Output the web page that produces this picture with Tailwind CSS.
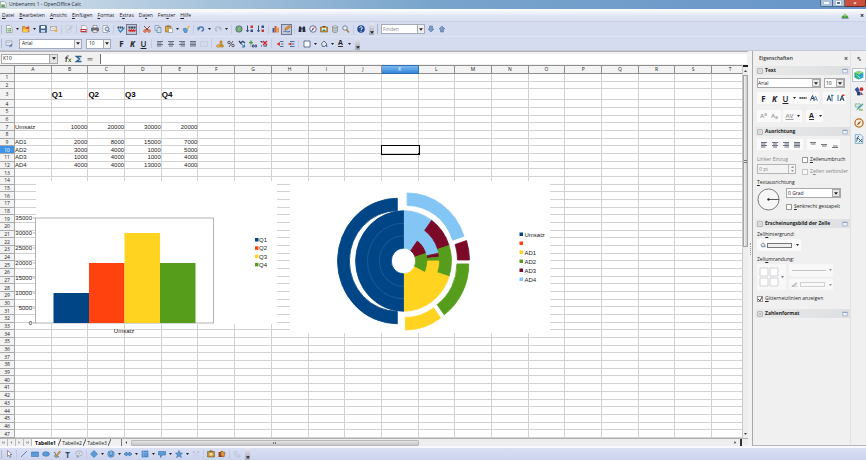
<!DOCTYPE html>
<html lang="de">
<head>
  <meta charset="UTF-8" />
  <meta name="viewport" content="width=device-width, initial-scale=1.0" />
  <title>Unbenannt 1 - OpenOffice Calc</title>
  <script src="https://cdn.jsdelivr.net/npm/@tailwindcss/browser@4"></script>
</head>
<body class="h-screen flex flex-col overflow-hidden bg-[#f0f0f0] text-[#222] text-[5px] leading-[7px] font-['Open_Sans',sans-serif]">

  <!-- Title bar -->
  <header class="flex h-[9px] shrink-0 items-center bg-linear-to-r from-[#d3e0ea] via-[#78a4cc] to-[#6795c8]">
    <svg viewBox="0 0 16 16" class="w-[7px] h-[7px]"><path d="M1 1h9l4 4v10H1z" fill="#f4f8f4" stroke="#4b6b58"/><path d="M3 8h8v6H3z" fill="#5f9d62"/></svg>
    <h1 class="ml-[2px] text-[#1c2530]">Unbenannt 1 - OpenOffice Calc</h1>
    <div class="ml-auto flex self-start h-[7px]">
      <button aria-label="Minimieren" class="w-[13px] flex items-center justify-center rounded-bl-[2px] border border-t-0 border-[#4d6c8c] bg-[#a9c1da]"><span class="w-[5px] h-[2px] bg-white"></span></button>
      <button aria-label="Maximieren" class="w-[12px] flex items-center justify-center border border-t-0 border-l-0 border-[#4d6c8c] bg-[#a9c1da]"><span class="w-[5px] h-[4px] border border-white bg-[#55708c]"></span></button>
      <button aria-label="Schließen" class="w-[21px] flex items-center justify-center rounded-br-[2px] border border-t-0 border-l-0 border-[#6b2a20] bg-[#c9513c] text-white font-bold text-[6px]">×</button>
    </div>
  </header>

  <!-- Menu bar -->
  <nav class="flex h-[12px] shrink-0 items-center gap-[5px] border-t border-white bg-linear-to-b from-[#fbfcff] via-[#e2e7f6] to-[#d9dff2] pl-[2px] pr-[2px]">
    <a href="#"><u>D</u>atei</a>
    <a href="#"><u>B</u>earbeiten</a>
    <a href="#"><u>A</u>nsicht</a>
    <a href="#"><u>E</u>infügen</a>
    <a href="#"><u>F</u>ormat</a>
    <a href="#">E<u>x</u>tras</a>
    <a href="#">Da<u>t</u>en</a>
    <a href="#">Fen<u>s</u>ter</a>
    <a href="#"><u>H</u>ilfe</a>
    <svg viewBox="0 0 16 12" class="ml-auto w-[8px] h-[6px]"><path d="M1 10c0-8 14-8 14 0z" fill="#4c9b3d"/><circle cx="8" cy="4" r="3" fill="#9bd06c"/><path d="M1 11h14" stroke="#35549a"/></svg>
    <button aria-label="Dokument schließen" class="ml-[6px] text-[7px] font-bold">×</button>
  </nav>

  <!-- Standard toolbar -->
  <div class="flex h-[15px] shrink-0 items-center bg-[#d5dcf0] border-t border-[#cbd2e8]">
    <div id="bar-standard" class="flex items-center"></div>
    <span class="ml-[3px] mr-[3px] w-[1px] h-[10px] bg-[#a6aecb]"></span>
    <div class="flex h-[10px] w-[44px] border border-[#a5abbb] bg-white">
      <input aria-label="Finden" placeholder="Finden" class="min-w-0 flex-1 pl-[1px] outline-none placeholder:text-[#8a8a8a]" />
      <button aria-label="Suchliste" class="w-[7px] flex items-center justify-center border-l border-[#a5abbb] bg-[#eee]"><svg viewBox="0 0 6 4" class="w-[4px] h-[3px]"><path d="M0 0h6L3 4z" fill="#222"/></svg></button>
    </div>
    <div id="bar-find" class="flex items-center"></div>
  </div>

  <!-- Formatting toolbar -->
  <div class="flex h-[14px] shrink-0 items-center bg-[#d5dcf0] border-t border-[#dfe4f4]">
    <div id="bar-style" class="flex items-center"></div>
    <div class="ml-[5px] flex h-[10px] w-[63px] border border-[#a5abbb] bg-white">
      <select aria-label="Schriftart" class="min-w-0 flex-1 appearance-none pl-[2px]"><option>Arial</option></select>
      <span class="w-[7px] flex items-center justify-center border-l border-[#a5abbb] bg-[#eee]"><svg viewBox="0 0 6 4" class="w-[4px] h-[3px]"><path d="M0 0h6L3 4z" fill="#222"/></svg></span>
    </div>
    <div class="ml-[4px] mr-[5px] flex h-[10px] w-[25px] border border-[#a5abbb] bg-white">
      <select aria-label="Schriftgröße" class="min-w-0 flex-1 appearance-none pl-[2px]"><option>10</option></select>
      <span class="w-[7px] flex items-center justify-center border-l border-[#a5abbb] bg-[#eee]"><svg viewBox="0 0 6 4" class="w-[4px] h-[3px]"><path d="M0 0h6L3 4z" fill="#222"/></svg></span>
    </div>
    <div id="bar-format" class="flex items-center"></div>
  </div>

  <div class="flex min-h-0 flex-1 border-t border-[#c3c8d8]">
    <main class="flex min-w-0 flex-1 flex-col">

      <!-- Formula bar -->
      <div class="flex h-[14px] shrink-0 items-center border-t border-[#b4b4b4]">
        <div class="ml-[1px] flex h-[10px] w-[57px] border border-[#a9a9a9] bg-white">
          <input aria-label="Namensfeld" value="K10" class="min-w-0 flex-1 pl-[1px] outline-none" />
          <button aria-label="Bereiche" class="w-[8px] flex items-center justify-center border-l border-[#a9a9a9] bg-[#e4e4e4]"><svg viewBox="0 0 6 4" class="w-[4px] h-[3px]"><path d="M0 0h6L3 4z" fill="#222"/></svg></button>
        </div>
        <div id="bar-formula" class="ml-[4px] flex items-center"></div>
        <input aria-label="Eingabezeile" class="ml-[5px] mr-[1px] h-[10px] min-w-0 flex-1 border-l border-[#6c6c6c] bg-white outline-none" />
      </div>

      <div class="flex min-h-0 flex-1">
        <!-- Sheet -->
        <div class="relative min-w-0 flex-1 overflow-hidden bg-white">
          <table class="h-full w-[749px] table-fixed border-separate border-spacing-0 font-['Liberation_Sans',sans-serif] text-[6px] leading-[7px]">
            <thead class="font-['Open_Sans',sans-serif] text-[5px]"><tr id="col-heads"></tr></thead>
            <tbody id="rows"></tbody>
          </table>
          <svg id="bar-chart" role="img" aria-label="Umsatz nach Quartal" viewBox="0 0 262 155" class="absolute left-[15px] top-[116px] w-[262px] h-[155px] font-['Liberation_Sans',sans-serif] text-[6px]"></svg>
          <svg id="ring-chart" role="img" aria-label="Umsatz nach AD" viewBox="0 0 260 152" class="absolute left-[290px] top-[116px] w-[260px] h-[152px] font-['Liberation_Sans',sans-serif] text-[6px]"></svg>
        </div>

        <!-- Vertical scrollbar -->
        <div class="flex w-[6px] shrink-0 flex-col items-center border-l border-[#c8c8c8] bg-[#eeeeee]">
          <span class="h-[2px] w-full bg-[#222]"></span>
          <svg viewBox="0 0 6 4" class="my-[3px] w-[3px] h-[2px]"><path d="M0 4h6L3 0z" fill="#444"/></svg>
          <div class="flex h-[172px] w-full flex-col items-center justify-center gap-[1px] border border-[#a4a4a4] bg-linear-to-r from-[#f4f4f4] to-[#c9c9c9]">
            <span class="w-[3px] h-[1px] bg-[#777]"></span><span class="w-[3px] h-[1px] bg-[#777]"></span>
          </div>
          <svg viewBox="0 0 6 4" class="mt-auto mb-[3px] w-[3px] h-[2px]"><path d="M0 0h6L3 4z" fill="#444"/></svg>
        </div>
      </div>

      <!-- Sheet tabs and horizontal scrollbar -->
      <div class="flex h-[8px] shrink-0 border-t border-[#b0b0b0]">
        <div class="flex w-[32px] text-[#777] [&>button]:flex [&>button]:flex-1 [&>button]:items-center [&>button]:justify-center [&>button]:border-r [&>button]:border-[#bbb]">
          <button aria-label="Erste Tabelle"><svg viewBox="0 0 6 6" class="w-[3px] h-[3px]"><path d="M0 0h1v6H0zM5 0v6L2 3z" fill="#888"/></svg></button>
          <button aria-label="Vorige Tabelle"><svg viewBox="0 0 6 6" class="w-[3px] h-[3px]"><path d="M4 0v6L1 3z" fill="#888"/></svg></button>
          <button aria-label="Nächste Tabelle"><svg viewBox="0 0 6 6" class="w-[3px] h-[3px]"><path d="M1 0v6l3-3z" fill="#888"/></svg></button>
          <button aria-label="Letzte Tabelle"><svg viewBox="0 0 6 6" class="w-[3px] h-[3px]"><path d="M1 0v6l3-3zM5 0h1v6H5z" fill="#888"/></svg></button>
        </div>
        <div class="flex w-[90px] items-center border-r border-[#777]">
          <button class="h-full w-[26px] bg-white pl-[1px] font-bold leading-[6px] text-black">Tabelle1</button>
          <svg viewBox="0 0 3 7" class="w-[3px] h-[7px]"><path d="M0 7L3 0" stroke="#555"/></svg>
          <button class="h-full w-[22px] leading-[6px]">Tabelle2</button>
          <svg viewBox="0 0 3 7" class="w-[3px] h-[7px]"><path d="M0 7L3 0" stroke="#555"/></svg>
          <button class="h-full w-[22px] leading-[6px]">Tabelle3</button>
          <svg viewBox="0 0 3 7" class="w-[3px] h-[7px]"><path d="M0 7L3 0" stroke="#555"/></svg>
        </div>
        <div class="flex min-w-0 flex-1 items-center bg-[#eee]">
          <svg viewBox="0 0 6 6" class="mx-[3px] w-[3px] h-[3px]"><path d="M4 0v6L1 3z" fill="#444"/></svg>
          <div class="flex h-[6px] w-[46%] items-center justify-center gap-[1px] rounded-[1px] border border-[#b8b8b8] bg-linear-to-b from-[#e4e4e4] to-[#c6c6c6]">
            <span class="w-[1px] h-[2px] bg-[#777]"></span><span class="w-[1px] h-[2px] bg-[#777]"></span>
          </div>
          <svg viewBox="0 0 6 6" class="ml-auto w-[3px] h-[3px]"><path d="M1 0v6l3-3z" fill="#222"/></svg>
          <span class="ml-[3px] mr-[6px] w-[2px] h-[7px] bg-[#333]"></span>
        </div>
      </div>
    </main>

    <!-- Splitter -->
    <div class="flex w-[5px] shrink-0 items-center justify-center border-r border-[#a9a9a9] bg-[#f2f2f2]"><span class="h-[12px] border-l border-dotted border-[#999]"></span></div>

    <!-- Properties panel -->
    <aside class="flex w-[113px] shrink-0 border-b border-[#b5b5b5]">
      <div class="flex min-w-0 flex-1 flex-col pl-[2px]">
        <div class="flex h-[15px] items-center pl-[4px] pr-[2px] text-[#333] font-semibold">Eigenschaften<button aria-label="Leiste schließen" class="ml-auto text-[7px]">×</button></div>

        <section>
          <h2 class="flex h-[9px] items-center gap-[2px] bg-linear-to-r from-[#e9e9e9] to-[#dddfe1] px-[2px] font-bold"><span data-icon="minus"></span>Text<span data-icon="more" class="ml-auto"></span></h2>
          <div class="flex h-[47px] flex-col gap-[4px] pt-[3px] pl-[2px]">
            <div class="flex gap-[3px]">
              <div class="flex h-[10px] w-[64px] border border-[#a9a9a9] bg-white">
                <select aria-label="Schriftname" class="min-w-0 flex-1 appearance-none"><option>Arial</option></select>
                <span class="w-[8px] flex items-center justify-center border border-[#a9a9a9] bg-[#e8e8e8]"><svg viewBox="0 0 6 4" class="w-[4px] h-[3px]"><path d="M0 0h6L3 4z" fill="#222"/></svg></span>
              </div>
              <div class="flex h-[10px] w-[21px] border border-[#a9a9a9] bg-white">
                <select aria-label="Größe" class="min-w-0 flex-1 appearance-none pl-[1px]"><option>10</option></select>
                <span class="w-[8px] flex items-center justify-center border border-[#a9a9a9] bg-[#e8e8e8]"><svg viewBox="0 0 6 4" class="w-[4px] h-[3px]"><path d="M0 0h6L3 4z" fill="#222"/></svg></span>
              </div>
            </div>
            <div class="flex gap-[4px] [&>div]:flex [&>div]:items-center [&>div]:bg-[#fafafa] [&>div]:h-[12px]">
              <div id="side-char" class="pl-[1px]"></div>
              <div id="side-size" class="pl-[1px]"></div>
            </div>
            <div class="mt-[2px] flex gap-[2px] [&>div]:flex [&>div]:items-center [&>div]:bg-[#fafafa] [&>div]:h-[12px]">
              <div id="side-script" class="px-[1px]"></div>
              <div id="side-spacing" class="px-[1px]"></div>
              <div id="side-color" class="ml-[2px]"></div>
            </div>
          </div>
        </section>

        <section class="mt-[5px]">
          <h2 class="flex h-[9px] items-center gap-[2px] bg-linear-to-r from-[#e9e9e9] to-[#dddfe1] px-[2px] font-bold"><span data-icon="minus"></span>Ausrichtung<span data-icon="more" class="ml-auto"></span></h2>
          <div class="flex h-[83px] flex-col pt-[3px] pl-[2px]">
            <div class="flex gap-[4px] [&>div]:flex [&>div]:items-center [&>div]:bg-[#fafafa] [&>div]:h-[11px]">
              <div id="side-halign" class="px-[1px]"></div>
              <div id="side-valign"></div>
            </div>
            <div class="mt-[6px] flex gap-[6px]">
              <div class="flex w-[39px] flex-col gap-[1px]">
                <label for="indent" class="text-[#888]">Linker Einzug</label>
                <div class="flex h-[10px] border border-[#b5b5b5] bg-[#f4f4f4]">
                  <input id="indent" value="0 pt" disabled class="min-w-0 flex-1 pl-[1px] text-[#888]" />
                  <span class="flex w-[7px] flex-col items-center justify-center gap-[2px] border-l border-[#bbb]"><svg viewBox="0 0 6 4" class="w-[3px] h-[2px]"><path d="M0 4h6L3 0z" fill="#999"/></svg><svg viewBox="0 0 6 4" class="w-[3px] h-[2px]"><path d="M0 0h6L3 4z" fill="#999"/></svg></span>
                </div>
              </div>
              <div class="flex min-w-0 flex-col gap-[5px]">
                <label class="flex items-center gap-[2px] whitespace-nowrap"><input type="checkbox" class="h-[6px] w-[6px] shrink-0 appearance-none border border-[#999] bg-white" /><span><u>Z</u>eilenumbruch</span></label>
                <label class="flex items-center gap-[2px] whitespace-nowrap text-[#888]"><input type="checkbox" disabled class="h-[6px] w-[6px] shrink-0 appearance-none border border-[#c4c4c4] bg-[#f8f8f8]" /><span>Z<u>e</u>llen verbinder</span></label>
              </div>
            </div>
            <label for="degrees" class="mt-[4px]"><u>T</u>extausrichtung</label>
            <div class="mt-[2px] flex gap-[6px]">
              <svg viewBox="0 0 24 24" class="w-[23px] h-[23px]"><circle cx="12" cy="12" r="11" fill="#f6f6f6" stroke="#777"/><path d="M11 12h12" stroke="#555"/><circle cx="12" cy="12" r="1.2" fill="#222"/></svg>
              <div class="flex flex-col gap-[5px]">
                <div class="flex h-[10px] w-[55px] border border-[#a9a9a9] bg-white">
                  <select id="degrees" class="min-w-0 flex-1 appearance-none pl-[1px]"><option>0 Grad</option></select>
                  <span class="w-[8px] flex items-center justify-center border border-[#a9a9a9] bg-[#e8e8e8]"><svg viewBox="0 0 6 4" class="w-[4px] h-[3px]"><path d="M0 0h6L3 4z" fill="#222"/></svg></span>
                </div>
                <label class="flex items-center gap-[2px] whitespace-nowrap"><input type="checkbox" class="h-[6px] w-[6px] appearance-none border border-[#999] bg-white" /><span><u>S</u>enkrecht gestapelt</span></label>
              </div>
            </div>
          </div>
        </section>

        <section>
          <h2 class="flex h-[9px] items-center gap-[2px] whitespace-nowrap bg-linear-to-r from-[#e9e9e9] to-[#dddfe1] px-[2px] font-bold"><span data-icon="minus"></span>Erscheinungsbild der Zelle<span data-icon="more" class="ml-auto"></span></h2>
          <div class="flex h-[81px] flex-col pt-[3px] pl-[2px]">
            <p>Zell<u>h</u>intergrund:</p>
            <button aria-label="Zellhintergrund" class="mt-[1px] flex h-[12px] w-[44px] items-center gap-[1px] bg-[#fafafa] pl-[3px]">
              <span data-icon="bucket"></span><span class="h-[5px] w-[25px] border border-[#777] bg-[#eee]"></span><svg viewBox="0 0 6 4" class="ml-[3px] w-[3px] h-[2px]"><path d="M0 0h6L3 4z" fill="#222"/></svg>
            </button>
            <p class="mt-[5px]">Zell<u>u</u>mrandung:</p>
            <div class="mt-[1px] flex gap-[3px]">
              <button aria-label="Umrandung" class="flex h-[26px] w-[29px] items-center gap-[2px] bg-[#f8f8f8] pl-[2px]"><svg viewBox="0 0 20 20" class="w-[20px] h-[20px]"><path d="M1 1h8v8H1zM11 1h8v8h-8zM1 11h8v8H1zM11 11h8v8h-8z" fill="#fdfdfd" stroke="#d0d4d8"/></svg><svg viewBox="0 0 6 4" class="w-[3px] h-[2px]"><path d="M0 0h6L3 4z" fill="#777"/></svg></button>
              <div class="flex flex-col gap-[3px]">
                <button aria-label="Linienart" class="flex h-[12px] w-[44px] items-center gap-[3px] bg-[#f8f8f8] pl-[3px]"><span class="h-[1px] w-[34px] bg-[#c4c4c4]"></span><svg viewBox="0 0 6 4" class="w-[3px] h-[2px]"><path d="M0 0h6L3 4z" fill="#999"/></svg></button>
                <button aria-label="Linienfarbe" class="flex h-[11px] w-[44px] items-center gap-[2px] bg-[#f8f8f8] pl-[2px]"><svg viewBox="0 0 8 6" class="w-[7px] h-[5px]"><path d="M1 5l5-4 1 1-4 3zM0 6h8" fill="none" stroke="#aaa"/></svg><span class="h-[5px] w-[25px] border border-[#d0d0d0]"></span><svg viewBox="0 0 6 4" class="ml-[2px] w-[3px] h-[2px]"><path d="M0 0h6L3 4z" fill="#999"/></svg></button>
              </div>
            </div>
            <label class="mt-[5px] flex items-center gap-[2px] whitespace-nowrap">
              <span class="relative flex h-[6px] w-[6px]"><input type="checkbox" checked class="peer h-[6px] w-[6px] appearance-none border border-[#999] bg-white" /><svg viewBox="0 0 6 6" class="pointer-events-none absolute inset-0 hidden peer-checked:block"><path d="M1 3l2 2 2-4" fill="none" stroke="#444"/></svg></span>
              <span><u>G</u>itternetzlinien anzeigen</span>
            </label>
          </div>
        </section>

        <section>
          <h2 class="flex h-[9px] items-center gap-[2px] bg-linear-to-r from-[#e9e9e9] to-[#dddfe1] px-[2px] font-bold"><span data-icon="plus"></span>Zahlenformat<span data-icon="more" class="ml-auto"></span></h2>
        </section>
      </div>

      <!-- Deck tabs -->
      <div id="deck" class="flex w-[16px] flex-col items-center gap-[2px] border-l border-[#e2e2e2] pt-[1px]"></div>
    </aside>
  </div>

  <!-- Drawing toolbar -->
  <div class="flex h-[14px] shrink-0 items-center border-t-2 border-[#f8f9fd] bg-linear-to-b from-[#d9dff3] to-[#ccd4ee]">
    <div id="bar-draw" class="flex items-center"></div>
  </div>

  <script>
    const icons = {
      newdoc: '<path d="M3 1h7l4 4v10H3z" fill="#fff" stroke="#54705a"/><path d="M5 6h7v7H5z" fill="#63a35e"/><path d="M5 9h7M8 6v7" stroke="#fff"/>',
      open: '<path d="M1 3h5l1 2h7v9H1z" fill="#f0a52c" stroke="#a35b12"/><path d="M7 9l5-7 3 2-4 6z" fill="#d8452b"/><path d="M3 8h10l-2 6H1z" fill="#fbc94d"/>',
      save: '<rect x="1" y="1" width="14" height="14" rx="1" fill="#3e6697" stroke="#203f63"/><path d="M4 2h8v5H4z" fill="#fff"/><path d="M4 10h8v5H4z" fill="#c8d5e2"/>',
      mail: '<path d="M1 3h12v8H1z" fill="#f6f4ea" stroke="#86857b"/><path d="M1 3l6 5 6-5" fill="none" stroke="#86857b"/><circle cx="12" cy="11" r="3" fill="#e8b23c"/>',
      edit: '<path d="M2 2h10v12H2z" fill="#eef0f4" stroke="#8d93a5"/><path d="M5 11l1-3 7-6 2 2-7 6z" fill="#b9bdc8" stroke="#777"/>',
      pdf: '<path d="M3 1h7l4 4v10H3z" fill="#fff" stroke="#8d6a70"/><path d="M1 8h12v6H1z" fill="#c23440"/><path d="M3 11h8" stroke="#fff" stroke-width="2"/>',
      print: '<path d="M4 1h8v5H4z" fill="#fff" stroke="#555"/><path d="M1 6h14v6H1z" fill="#74797f" stroke="#3d4247"/><path d="M4 10h8v5H4z" fill="#eee" stroke="#555"/>',
      preview: '<path d="M2 1h9v14H2z" fill="#fff" stroke="#777"/><circle cx="10" cy="8" r="4" fill="#cfe0ee" stroke="#4d6580" stroke-width="1.5"/><path d="M13 11l2 3" stroke="#4d6580" stroke-width="2"/>',
      spell: '<path d="M1 5h12" stroke="#32425e" stroke-width="4" stroke-dasharray="3 1"/><path d="M3 9l4 5 8-9" fill="none" stroke="#2f83b5" stroke-width="2.5"/>',
      autospell: '<path d="M1 5h14" stroke="#32425e" stroke-width="4" stroke-dasharray="4 1"/><path d="M1 12l2-2 2 2 2-2 2 2 2-2 2 2 2-2" fill="none" stroke="#d12b2b" stroke-width="3"/>',
      cut: '<path d="M2 2l9 9M14 2l-9 9" stroke="#8a4a3c" stroke-width="2"/><circle cx="4" cy="12" r="2.5" fill="none" stroke="#d0491f" stroke-width="2"/><circle cx="12" cy="12" r="2.5" fill="none" stroke="#d0491f" stroke-width="2"/>',
      copy: '<path d="M2 1h8v10H2z" fill="#e8edf3" stroke="#4a6689"/><path d="M6 5h8v10H6z" fill="#cfe0e6" stroke="#3a5f7f"/>',
      paste: '<path d="M1 2h11v12H1z" fill="#e1a33a" stroke="#80551a"/><path d="M4 1h5v3H4z" fill="#777"/><path d="M7 7h8v8H7z" fill="#fff" stroke="#777"/>',
      brush: '<path d="M9 7l5-6 2 2-5 6z" fill="#e3b04b"/><path d="M2 8l5-2 4 4-2 5H5z" fill="#58a3d3" stroke="#2c6390"/>',
      undo: '<path d="M3 8a5 4 0 1 1 6 4" fill="none" stroke="#4d79b1" stroke-width="3"/><path d="M0 5l7 1-5 6z" fill="#4d79b1"/>',
      redo: '<path d="M13 8a5 4 0 1 0-6 4" fill="none" stroke="#858da0" stroke-width="3"/><path d="M16 5l-7 1 5 6z" fill="#858da0"/>',
      link: '<circle cx="8" cy="8" r="6.5" fill="#5f9a63" stroke="#34557a"/><path d="M2 8h12M8 2v12M4 4c3 3 5 3 8 0M4 12c3-3 5-3 8 0" fill="none" stroke="#a8caa3"/>',
      sortup: '<path d="M3 1v12M1 10l2 4 2-4" fill="none" stroke="#374f80" stroke-width="2"/><path d="M9 1h5v5H9z" fill="#c53a2e"/><path d="M9 9h5v5H9z" fill="#374f80"/>',
      sortdown: '<path d="M3 1v12M1 10l2 4 2-4" fill="none" stroke="#374f80" stroke-width="2"/><path d="M9 1h5v5H9z" fill="#374f80"/><path d="M9 9h5v5H9z" fill="#c53a2e"/>',
      chart: '<path d="M1 6h4v9H1z" fill="#405e93"/><path d="M5 2h4v13H5z" fill="#d25b36"/><path d="M9 5h5v10H9z" fill="#e89a4c"/>',
      draw: '<path d="M1 13c4-3 6 3 13 0" fill="none" stroke="#3f70b0" stroke-width="2"/><path d="M4 10l1-4 8-5 2 3-7 5z" fill="#ee9a2e" stroke="#935113"/>',
      find: '<path d="M2 3h4l1 11H1zM10 3h4l1 11H9z" fill="#27303d"/><path d="M6 5h4v4H6z" fill="#495669"/>',
      nav: '<circle cx="8" cy="8" r="6.5" fill="#f3f5fa" stroke="#3b4c87" stroke-width="1.5"/><path d="M12 3L9 9 7 7z" fill="#d2332c"/><path d="M4 13l3-6 2 2z" fill="#2d3a60"/>',
      gallery: '<path d="M1 4h14v10H1z" fill="#c99a3c" stroke="#6b4b1c"/><path d="M5 2h6v2H5z" fill="#6b4b1c"/><path d="M4 6h8v6H4z" fill="#e7eef0"/><path d="M4 12l4-4 4 4z" fill="#3f8a54"/>',
      db: '<path d="M3 3v10c0 3 10 3 10 0V3z" fill="#b9c0bd" stroke="#67706e"/><ellipse cx="8" cy="3.500" rx="5" ry="2" fill="#e6eae6" stroke="#67706e"/>',
      zoom: '<circle cx="6" cy="6" r="4.500" fill="#e3eef5" stroke="#55667c" stroke-width="1.500"/><path d="M9 9l5 6" stroke="#a9793a" stroke-width="3"/>',
      help: '<circle cx="8" cy="8" r="7.500" fill="#244c94"/><path d="M5.500 6c0-4 5-3 5 0 0 2-2.500 2-2.500 4M8 11.500v2" fill="none" stroke="#fff" stroke-width="2"/>',
      down: '<path d="M8 14l6-6h-3V2H5v6H2z" fill="#7b9cc8" stroke="#4c6b98"/>',
      up: '<path d="M8 2l6 6h-3v6H5V8H2z" fill="#7b9cc8" stroke="#4c6b98"/>',
      styles: '<path d="M2 2h12v9H2z" fill="#f4f6fb" stroke="#66738c"/><path d="M4 5h7M4 8h5" stroke="#8a94ab"/><path d="M9 10l5-3v6l-5 2z" fill="#6586b6"/>',
      left: '<path d="M2 3h12M2 6h9M2 9h12M2 12h9" stroke="#6a7180" stroke-width="2"/>',
      center: '<path d="M2 3h12M4 6h8M2 9h12M4 12h8" stroke="#6a7180" stroke-width="2"/>',
      right: '<path d="M2 3h12M5 6h9M2 9h12M5 12h9" stroke="#6a7180" stroke-width="2"/>',
      just: '<path d="M2 3h12M2 6h12M2 9h12M2 12h12" stroke="#6a7180" stroke-width="2"/>',
      merge: '<path d="M1 3h14v10H1zM1 6h14M1 10h14M6 3v3M10 10v3" fill="#eef0f4" stroke="#8d93a5"/>',
      money: '<path d="M8 2h4v9H8z" fill="#e0a32e" stroke="#94641a"/><ellipse cx="5" cy="12" rx="4" ry="2.500" fill="#f0bb41" stroke="#94641a"/><ellipse cx="12" cy="12" rx="3" ry="2.500" fill="#e0a32e" stroke="#94641a"/>',
      percent: '<circle cx="4" cy="5" r="2.500" fill="none" stroke="#333" stroke-width="1.500"/><circle cx="12" cy="11" r="2.500" fill="none" stroke="#333" stroke-width="1.500"/><path d="M12 2L4 14" stroke="#333" stroke-width="1.500"/>',
      numfmt: '<path d="M2 2l4 5 3-5M9 2l5 4" fill="none" stroke="#2b3c66" stroke-width="2.500"/><path d="M7 8l6 6M13 9v5H8" stroke="#2f72a8" stroke-width="2" fill="none"/>',
      adddec: '<path d="M4 1v8M0 5h8" stroke="#4b9a38" stroke-width="2.500"/><path d="M3 12h2M7 10h3v4H7zM12 10h3v4h-3z" fill="none" stroke="#2b3c66" stroke-width="1.500"/>',
      deldec: '<path d="M6 2l8 8M14 2l-8 8" stroke="#cf2626" stroke-width="2.500"/><path d="M1 3h3v3M2 12h2M7 12h7" fill="none" stroke="#2b3c66" stroke-width="2"/>',
      outdent: '<path d="M8 3h7M8 13h7M10 8h5" stroke="#4671a8" stroke-width="2"/><path d="M8 4v8L1 8z" fill="#d13a30"/>',
      indent: '<path d="M6 3h9M6 13h9M10 8h5" stroke="#4671a8" stroke-width="2"/><path d="M9 5v6L1 8z" fill="#d13a30"/>',
      border: '<path d="M2 2h12v12H2z" fill="#fafcff" stroke="#3f4f6c" stroke-width="1.500"/>',
      bucket: '<path d="M3 7l5-5 6 6-5 5H5z" fill="#dfe5ec" stroke="#3d4a68" stroke-width="1.500"/><path d="M13 9c3 3 2 5 0 5s-2-3 0-5z" fill="#3d6fb3"/>',
      fx: '<path d="M9 2c-4-2-4 3-5 12M2 6h6" fill="none" stroke="#333" stroke-width="2"/><path d="M9 7l5 7M14 7l-5 7" stroke="#5d7b22" stroke-width="2"/>',
      sum: '<path d="M13 3H3l6 5-6 5h10" fill="none" stroke="#2a6391" stroke-width="3"/>',
      equal: '<path d="M3 7h10M3 10h10" stroke="#666" stroke-width="1.500"/>',
      strike: '<path d="M1 8h14" stroke="#444" stroke-width="3" stroke-dasharray="3 1"/><path d="M0 8h16" stroke="#444"/>',
      pointer: '<path d="M5 1v12l3-3 2 5 2-1-2-5h4z" fill="#fff" stroke="#444"/>',
      line: '<path d="M2 14L14 2" stroke="#3a67a3" stroke-width="1.500"/>',
      rect: '<path d="M1 4h14v9H1z" fill="#5a9bd8" stroke="#2b62a0"/>',
      ellipse: '<ellipse cx="8" cy="8" rx="7" ry="4.500" fill="#5a9bd8" stroke="#2b62a0"/>',
      pen: '<path d="M2 6c1-4 5 2 2 5s3 4 8 2" fill="none" stroke="#3c4d3a" stroke-width="1.500"/><path d="M6 11l7-9 2 2-7 8z" fill="#e8ab37" stroke="#7c5919"/>',
      bubble: '<ellipse cx="8" cy="7" rx="6.500" ry="5" fill="#f2f4fa" stroke="#68748c"/><path d="M5 11l-1 4 4-3M5 6h6M5 8h6" fill="none" stroke="#68748c"/>',
      diamond: '<path d="M8 1l7 7-7 7-7-7z" fill="#5a9bd8" stroke="#2b62a0"/>',
      smiley: '<circle cx="8" cy="8" r="6.500" fill="#7fb6e6" stroke="#2b62a0"/><path d="M5 9c1 4 5 4 6 0M5 5v2M11 5v2" fill="none" stroke="#1d4a80" stroke-width="1.500"/>',
      arrows: '<path d="M0 8l5-4v2h6V4l5 4-5 4v-2H5v2z" fill="#5a9bd8" stroke="#2b62a0"/>',
      square: '<path d="M2 2h12v12H2z" fill="#5a9bd8" stroke="#2b62a0"/><path d="M5 2v12M2 5h12" stroke="#8dbde8"/>',
      callout: '<path d="M1 3h14v7H9l-4 5V10H1z" fill="#5a9bd8" stroke="#2b62a0"/>',
      star: '<path d="M8 1l2 5h5l-4 4 2 5-5-3-5 3 2-5-4-4h5z" fill="#5a9bd8" stroke="#2b62a0"/>',
      points: '<path d="M2 3h3v3H2zM11 3h3v3h-3zM2 12h3M12 12h3M5 6l6 6" fill="none" stroke="#7d8597"/>',
      image: '<path d="M1 3h14v11H1z" fill="#c7923a" stroke="#6b4b1c"/><path d="M5 1h6v2H5z" fill="#6b4b1c"/><path d="M5 6h6v5H5z" fill="#f6e6b8"/>',
      fontwork: '<path d="M1 4h8v10H1z" fill="#8d4a2c"/><path d="M6 2l8 3-2 9-7-3z" fill="#e39437" stroke="#6d3612"/>',
      extrude: '<path d="M2 3h5v5l7 2v4c-6 1-10-2-12-6z" fill="#c9cfdb" stroke="#7d8597"/>',
      grow: '<path d="M2 14L6 3l4 11M4 10h4" fill="none" stroke="#33415c" stroke-width="2"/><path d="M10 3h5M12 1v14" stroke="#3a78ad" stroke-width="2"/>',
      shrink: '<path d="M6 14l4-11 4 11M8 10h5" fill="none" stroke="#33415c" stroke-width="2"/><path d="M2 2v12" stroke="#3a78ad" stroke-width="2"/><path d="M10 1h5v3h-5z" fill="#cf3b33"/>',
      shadow: '<path d="M1 13L5 3l4 10M3 9h5" fill="none" stroke="#33415c" stroke-width="2"/><path d="M7 14l4-10 4 10M9 11h5" fill="none" stroke="#6f93b8" stroke-width="2"/>',
      vtop: '<path d="M2 3h12M4 6h9" stroke="#777" stroke-width="2"/>',
      vmid: '<path d="M2 7h12M4 10h9" stroke="#777" stroke-width="2"/>',
      vbot: '<path d="M2 13h12M4 10h9" stroke="#777" stroke-width="2"/>',
      minus: '<path d="M2 2h12v12H2zM5 8h6" fill="#f8f8f8" stroke="#777" stroke-width="1.500"/>',
      plus: '<path d="M2 2h12v12H2zM5 8h6M8 5v6" fill="#f8f8f8" stroke="#777" stroke-width="1.500"/>',
      more: '<path d="M2 3h12v10H2z" fill="#eef3fb" stroke="#7e98bf" stroke-width="1.500"/><path d="M2 4h12" stroke="#7e98bf" stroke-width="2"/>',
      menu: '<path d="M4 4h6M4 7h5" stroke="#333" stroke-width="2"/><path d="M7 9h7l-3 4z" fill="#222"/>',
      props: '<path d="M8 1l7 3v8l-7 3-7-3V4z" fill="#2fa3cf"/><path d="M1 4l7 3v8l-7-3z" fill="#2bb07a"/><path d="M8 1l7 3-7 3-7-3z" fill="#8ddc70"/><path d="M4 8l6 5" stroke="#fff"/>',
      shapes: '<path d="M1 5l5-4 3 6-4 4z" fill="#3652a0"/><circle cx="12" cy="5" r="3" fill="#c73036"/><path d="M5 9h5v6H5z" fill="#2d3e6d"/><path d="M11 9l4 5h-5z" fill="#6a3f91"/>',
      stylist: '<path d="M2 3h8v5H2z" fill="#d9eed9" stroke="#6c9a7c"/><path d="M3 14l4-6 7-6 1 2-6 6z" fill="#4f9dae"/><path d="M8 11h6v3H8z" fill="#8cc474"/>',
      compass: '<circle cx="8" cy="8" r="6.500" fill="#fdf3df" stroke="#b36b20" stroke-width="2"/><path d="M12 4L9 9 7 7z" fill="#d9482a"/><path d="M4 12l3-5 2 2z" fill="#6b4a22"/>',
      functions: '<path d="M2 1h9l3 3v11H2z" fill="#eaf3fa" stroke="#4a86ad"/><path d="M8 4c-3-1-2 4-4 8M4 7h4M8 8l5 5M13 8l-5 5" fill="none" stroke="#1f5378" stroke-width="1.500"/>',
    };

    // letters that stand in for icons
    const glyphs = {
      bold: '<b class="text-[8px]">F</b>',
      italic: '<b class="text-[8px] italic font-[\'Liberation_Serif\',serif]">K</b>',
      underline: '<span class="text-[8px] font-semibold underline">U</span>',
      fontcolor: '<b class="text-[7px] border-b border-[#333] leading-[6px]">A</b>',
      text: '<b class="text-[8px] text-[#2b4a72]">T</b>',
      scriptA: '<b class="text-[6px]">A<sup class="text-[4px]">B</sup></b>',
      scriptB: '<b class="text-[6px]">A<sub class="text-[4px]">B</sub></b>',
      spacing: '<b class="text-[6px] underline">AV</b>',
    };

    function icon(name) {
      return glyphs[name] || `<svg viewBox="0 0 16 16" class="w-[8px] h-[8px]">${icons[name]}</svg>`;
    }

    // '|' separator, 'v' drop-down arrow, ':' grip, '>' overflow, '~x' disabled, '*x' pressed
    function toolbar(id, list) {
      const gap = id === 'bar-format' ? 'w-[5px]' : 'w-[4px]';
      document.getElementById(id).innerHTML = list.split(' ').map((item) => {
        if (item === '|') return `<span class="flex ${gap} justify-center"><i class="h-[9px] w-[1px] bg-[#c3cae2]"></i></span>`;
        if (item === ':') return '<span class="ml-[1px] mr-[1px] h-[9px] w-[1px] bg-[#b0b8d2]"></span>';
        if (item === 'v') return '<button aria-label="Auswahl" class="flex w-[6px] justify-center"><svg viewBox="0 0 6 4" class="w-[3px] h-[2px]"><path d="M0 0h6L3 4z" fill="#222"/></svg></button>';
        if (item === '>') return '<button aria-label="Weitere" class="ml-[3px] flex h-[12px] w-[5px] items-end justify-center bg-linear-to-b from-[#e6e8ee] to-[#a3a7b2] pb-[1px]"><svg viewBox="0 0 6 4" class="w-[4px] h-[3px]"><path d="M0 0h6L3 4z" fill="#222"/></svg></button>';
        const name = item.replace(/[~*]/, '');
        let state = '';
        if (item[0] === '~') state = 'opacity-40';
        if (item[0] === '*') state = 'border border-[#6f7890] bg-[#c4c9d8]';
        return `<button aria-label="${name}" class="flex h-[11px] w-[11px] items-center justify-center ${state}">${icon(name)}</button>`;
      }).join('');
    }

    toolbar('bar-standard', ': newdoc v open v save mail | ~edit | pdf print preview | spell *autospell | cut copy paste v brush | undo v ~redo v | link sortup sortdown | chart *draw | find nav gallery db zoom | help >');
    toolbar('bar-find', 'down up');
    toolbar('bar-style', ': styles');
    toolbar('bar-format', 'bold italic underline | left center right just ~merge | money percent numfmt adddec deldec | outdent indent | border v bucket v fontcolor v >');
    toolbar('bar-formula', 'fx sum equal');
    toolbar('bar-draw', ': pointer | line rect ellipse pen text bubble | diamond v smiley v arrows v square v callout v star v ~points | image fontwork | ~extrude >');
    toolbar('side-char', 'bold italic underline v strike shadow');
    toolbar('side-size', 'grow shrink');
    toolbar('side-script', '~scriptA ~scriptB');
    toolbar('side-spacing', '~spacing v');
    toolbar('side-color', 'fontcolor v');
    toolbar('side-halign', 'left center right just');
    toolbar('side-valign', 'vtop vmid vbot');

    document.querySelectorAll('[data-icon]').forEach((el) => {
      el.innerHTML = `<svg viewBox="0 0 16 16" class="w-[6px] h-[6px]">${icons[el.dataset.icon]}</svg>`;
    });

    document.getElementById('deck').innerHTML = ['menu', 'props', 'shapes', 'stylist', 'compass', 'functions'].map((name) => {
      const on = name === 'props' ? 'border border-[#b9c4cf] bg-white' : '';
      return `<button aria-label="${name}" class="flex h-[14px] w-[14px] items-center justify-center ${on}"><svg viewBox="0 0 16 16" class="${name === 'menu' ? 'w-[6px] h-[6px]' : 'w-[10px] h-[10px]'}">${icons[name]}</svg></button>`;
    }).join('');

    // ---- sheet ----
    const columns = 'ABCDEFGHIJKLMNOPQRST'.split('');
    const cells = {
      3: ['', 'Q1', 'Q2', 'Q3', 'Q4'],
      7: ['Umsatz', 10000, 20000, 30000, 20000],
      9: ['AD1', 2000, 8000, 15000, 7000],
      10: ['AD2', 3000, 4000, 1000, 5000],
      11: ['AD3', 1000, 4000, 1000, 4000],
      12: ['AD4', 4000, 4000, 13000, 4000],
    };

    document.getElementById('col-heads').innerHTML =
      '<th class="h-[9px] w-[15px] border-t border-r border-b border-[#8e8e8e] bg-[#efefef] p-0"></th>' +
      columns.map((c) => `<th class="h-[9px] border-t border-r border-b p-0 font-normal ${c === 'K' ? 'border-[#2f6fb5] bg-linear-to-b from-[#7db9f0] to-[#2f86dc] text-white' : 'border-[#8e8e8e] bg-[#f3f3f3]'}">${c}</th>`).join('');

    let body = '';
    for (let r = 1; r <= 47; r++) {
      const row = cells[r] || [];
      body += `<tr class="${r === 3 ? 'h-[10px]' : 'h-[7px]'}"><th class="border-r border-b border-[#a8a8a8] p-0 text-[5px] leading-[6px] font-normal font-['Open_Sans',sans-serif] ${r === 10 ? 'bg-[#3d93e8] text-white' : 'bg-[#f3f3f3]'}">${r}</th>`;
      columns.forEach((c, i) => {
        const value = row[i] === undefined ? '' : row[i];
        let look = 'text-left';
        if (typeof value === 'number') look = 'text-right';
        if (r === 3) look = 'text-left align-middle text-[8px] leading-[9px] font-bold text-black';
        if (c === 'K' && r === 10) look = 'outline outline-black relative after:absolute after:-right-[2px] after:-bottom-[2px] after:h-[2px] after:w-[2px] after:bg-black';
        body += `<td class="border-r border-b border-[#d2d2d2] p-0 leading-[6px] ${look}">${value}</td>`;
      });
      body += '</tr>';
    }
    document.getElementById('rows').innerHTML = body;

    // ---- bar chart ----
    const quarters = [
      { name: 'Q1', value: 10000, color: '#004586' },
      { name: 'Q2', value: 20000, color: '#ff420e' },
      { name: 'Q3', value: 30000, color: '#ffd320' },
      { name: 'Q4', value: 20000, color: '#579d1c' },
    ];
    const base = 142;
    const y = (v) => base - (v * 105) / 35000;
    let bars = '<rect x="21" y="0" width="241" height="143" fill="#fff"/><rect x="20.500" y="37" width="178" height="105" fill="#fff" stroke="#b3b3b3"/>';
    for (let v = 0; v <= 35000; v += 5000) {
      bars += `<path d="M18 ${y(v)}h3" stroke="#b3b3b3"/><text x="17" y="${y(v) + 2}" text-anchor="end" fill="#222">${v}</text>`;
    }
    quarters.forEach((q, i) => {
      bars += `<rect x="${38.5 + i * 35.5}" y="${y(q.value)}" width="35.500" height="${base - y(q.value)}" fill="${q.color}"/>`;
      bars += `<rect x="240" y="${57 + i * 8.3}" width="3.500" height="3.500" fill="${q.color}"/><text x="244" y="${61 + i * 8.3}" fill="#222">${q.name}</text>`;
    });
    bars += '<text x="109" y="152" text-anchor="middle" fill="#222">Umsatz</text>';
    document.getElementById('bar-chart').innerHTML = bars;

    // ---- ring chart, innermost ring is Q4 ----
    const series = [
      { name: 'Umsatz', color: '#004586' },
      { name: '', color: '#ff420e' },
      { name: 'AD1', color: '#ffd320' },
      { name: 'AD2', color: '#579d1c' },
      { name: 'AD3', color: '#7a0a28' },
      { name: 'AD4', color: '#83c5f5' },
    ];

    function wedge(r1, r2, from, to) {
      const p = (r, a) => `${(r * Math.sin(a)).toFixed(2)} ${(-r * Math.cos(a)).toFixed(2)}`;
      return `M${p(r2, from)}A${r2} ${r2} 0 0 1 ${p(r2, to)}L${p(r1, to)}A${r1} ${r1} 0 0 0 ${p(r1, from)}Z`;
    }

    let rings = '<rect width="260" height="152" fill="#fff"/><g transform="translate(113.5 80) scale(1 1.05)">';
    [4, 3, 2, 1].forEach((quarter, ring) => {
      const r1 = 12.2 + ring * 11.9;
      const total = cells[7][quarter] * 2;
      const parts = [[12, 5], [11, 4], [10, 3], [9, 2], [7, 0]];
      let angle = 0;
      parts.forEach(([row, s]) => {
        const next = angle + (cells[row][quarter] / total) * Math.PI * 2;
        const mid = (angle + next) / 2;
        const shift = ring === 3 ? 6.2 : 0;
        rings += `<path d="${wedge(r1, r1 + 11.9, angle, next)}" transform="translate(${(shift * Math.sin(mid)).toFixed(2)} ${(-shift * Math.cos(mid)).toFixed(2)})" fill="${series[s].color}" stroke="${series[s].color}" stroke-width="0.8"/>`;
        angle = next;
      });
    });
    // hairlines between the blue rings
    rings += '<path d="M0-24.100A24.100 24.100 0 0 0 0 24.100M0-36A36 36 0 0 0 0 36" fill="none" stroke="#2a649c" stroke-width="0.6"/></g>';
    series.forEach((s, i) => {
      rings += `<rect x="229.500" y="${51.5 + i * 9}" width="3.500" height="3.500" fill="${s.color}"/><text x="234.500" y="${55.5 + i * 9}" fill="#222">${s.name}</text>`;
    });
    document.getElementById('ring-chart').innerHTML = rings;
  </script>
</body>
</html>
